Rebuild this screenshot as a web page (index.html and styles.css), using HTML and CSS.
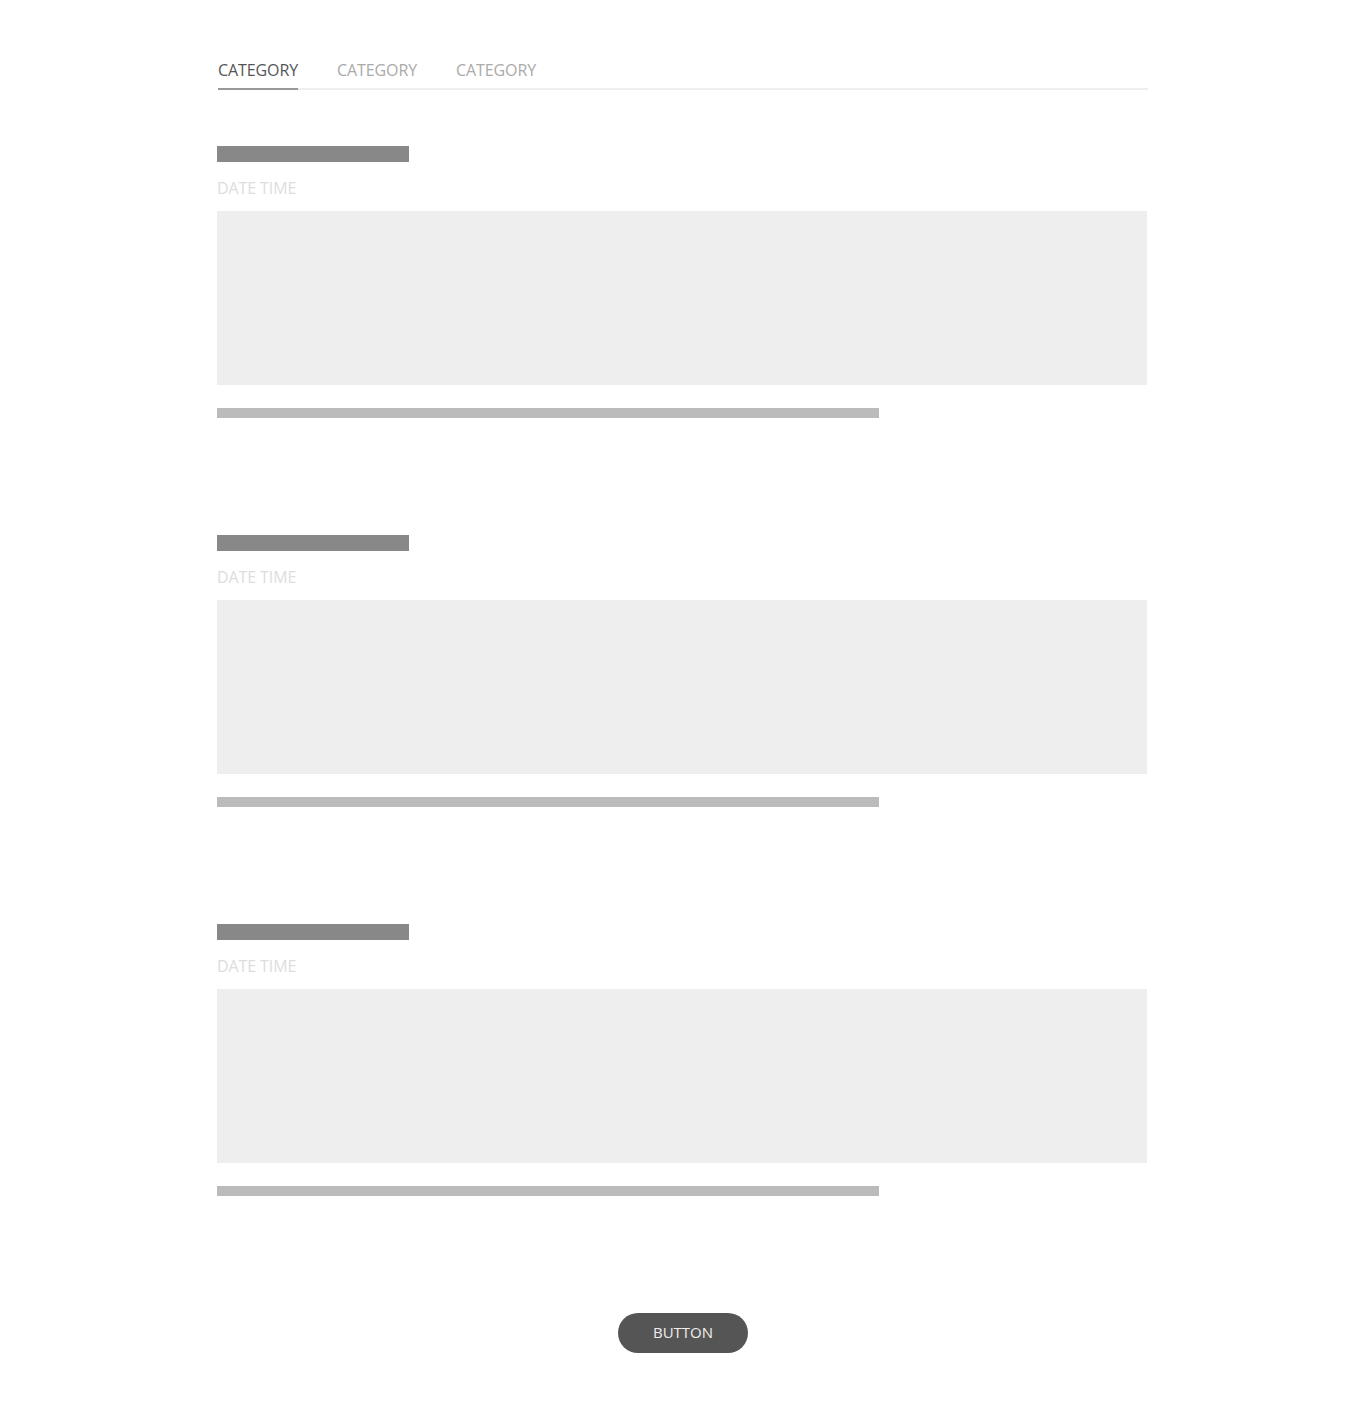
FILE: index.html
```html
<!DOCTYPE html>
<html lang="en">
<head>
    <meta charset="UTF-8">
    <meta name="viewport" content="width=device-width, initial-scale=1.0">
    <title>Posts</title>
    <link rel="stylesheet" href="styles.css">
</head>
<body>
    <div class="page">
        <ul class="tabs">
            <li class="tab active">CATEGORY</li>
            <li class="tab">CATEGORY</li>
            <li class="tab">CATEGORY</li>
        </ul>

        <div class="posts">
            <div class="post">
                <div class="post-title"></div>
                <div class="post-date">DATE TIME</div>
                <div class="post-image"></div>
                <div class="post-text"></div>
            </div>
            <div class="post">
                <div class="post-title"></div>
                <div class="post-date">DATE TIME</div>
                <div class="post-image"></div>
                <div class="post-text"></div>
            </div>
            <div class="post">
                <div class="post-title"></div>
                <div class="post-date">DATE TIME</div>
                <div class="post-image"></div>
                <div class="post-text"></div>
            </div>
        </div>

        <div class="more">
            <button>BUTTON</button>
        </div>
    </div>
</body>
</html>
```

FILE: styles.css
```css
body {
    margin: 0;
    font-family: "Open Sans", Arial, sans-serif;
    background: #fff;
}
.page {
    width: 930px;
    margin: 0 auto;
    padding: 58px 0 59px;
}
.tabs {
    display: flex;
    gap: 39px;
    list-style: none;
    margin: 0;
    padding: 0;
    border-bottom: 2px solid #eee;
}
.tab {
    font-size: 16px;
    line-height: 24px;
    letter-spacing: -0.1px;
    padding-bottom: 6px;
    margin-bottom: -2px;
    color: #aaa;
    border-bottom: 2px solid transparent;
}
.tab.active {
    color: #555;
    border-bottom-color: #999;
}
.posts {
    display: flex;
    flex-direction: column;
    gap: 117px;
    margin: 56px 1px 0 -1px;
}
.post-title {
    width: 192px;
    height: 16px;
    background-color: #888;
}
.post-date {
    margin-top: 14px;
    font-size: 16px;
    line-height: 24px;
    letter-spacing: -0.1px;
    color: #ddd;
}
.post-image {
    margin-top: 11px;
    height: 174px;
    background-color: #eee;
}
.post-text {
    margin-top: 23px;
    width: 662px;
    height: 10px;
    background-color: #bbb;
}
.more {
    display: flex;
    justify-content: center;
    margin-top: 117px;
}
button {
    width: 130px;
    height: 40px;
    padding: 0 0 2px;
    border: none;
    border-radius: 20px;
    background-color: #555;
    color: #eee;
    font-family: "Open Sans", Arial, sans-serif;
    font-size: 15px;
    cursor: pointer;
}
```
